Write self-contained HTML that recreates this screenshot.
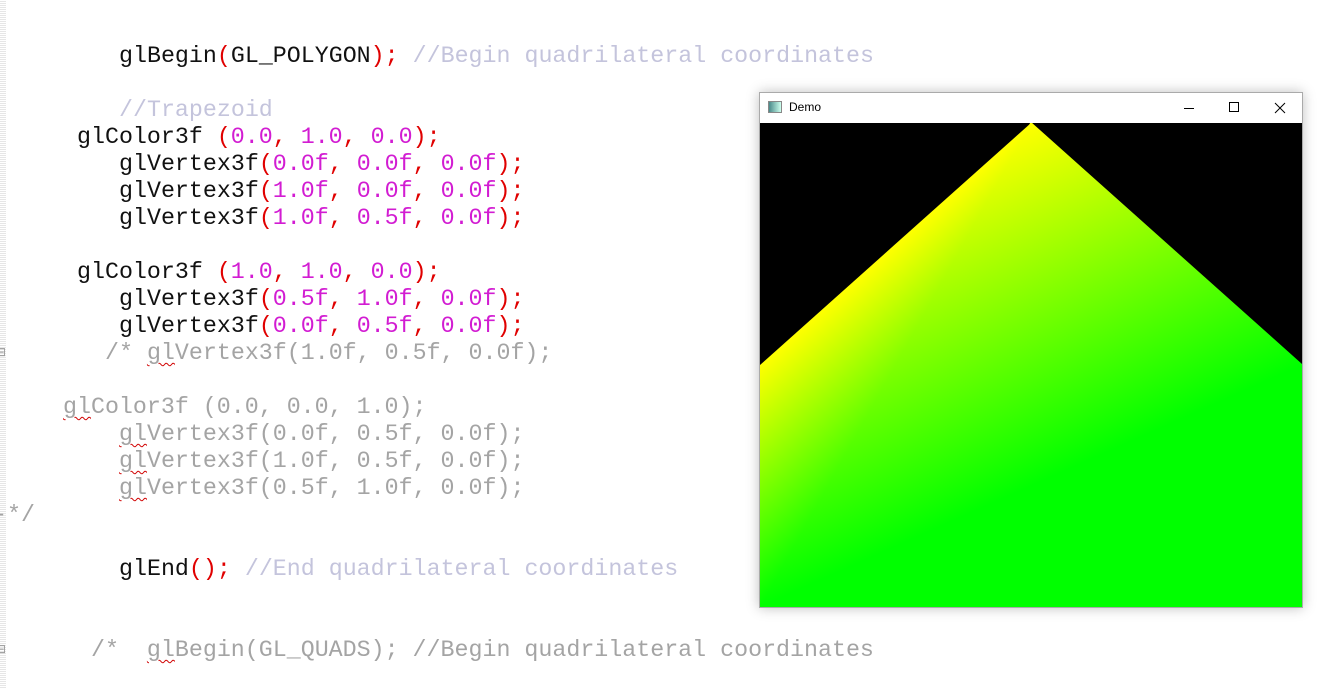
<!DOCTYPE html>
<html><head><style>
body{margin:0;width:1343px;height:689px;background:#fff;position:relative;overflow:hidden}
.l{position:absolute;margin:0;font-family:"Liberation Mono","Courier New",monospace;font-size:23.3px;line-height:27px;white-space:pre;color:#111}
.r{color:#e00000}.n{color:#d21cd2}.c{color:#c4c4dc}.g{color:#a4a4a4}
.u{text-decoration:underline wavy #d00000;text-decoration-thickness:1px;text-underline-offset:3px}
.gut{position:absolute;left:0;top:0;width:6px;height:689px;background:repeating-linear-gradient(#fff 0 1px,#e6e6e6 1px 2px)}
.fm{position:absolute;left:-4px;font-family:"DejaVu Sans",sans-serif;font-size:12px;color:#999}
</style></head><body>
<div class="gut"></div>
<div class="l" style="left:119px;top:43px">glBegin<span class="r">(</span>GL_POLYGON<span class="r">);</span> <span class="c">//Begin quadrilateral coordinates</span></div>
<div class="l c" style="left:119px;top:97px">//Trapezoid</div>
<div class="l" style="left:77px;top:124px">glColor3f <span class="r">(</span><span class="n">0.0</span><span class="r">,</span> <span class="n">1.0</span><span class="r">,</span> <span class="n">0.0</span><span class="r">);</span></div>
<div class="l" style="left:119px;top:151px">glVertex3f<span class="r">(</span><span class="n">0.0f</span><span class="r">,</span> <span class="n">0.0f</span><span class="r">,</span> <span class="n">0.0f</span><span class="r">);</span></div>
<div class="l" style="left:119px;top:178px">glVertex3f<span class="r">(</span><span class="n">1.0f</span><span class="r">,</span> <span class="n">0.0f</span><span class="r">,</span> <span class="n">0.0f</span><span class="r">);</span></div>
<div class="l" style="left:119px;top:205px">glVertex3f<span class="r">(</span><span class="n">1.0f</span><span class="r">,</span> <span class="n">0.5f</span><span class="r">,</span> <span class="n">0.0f</span><span class="r">);</span></div>
<div class="l" style="left:77px;top:259px">glColor3f <span class="r">(</span><span class="n">1.0</span><span class="r">,</span> <span class="n">1.0</span><span class="r">,</span> <span class="n">0.0</span><span class="r">);</span></div>
<div class="l" style="left:119px;top:286px">glVertex3f<span class="r">(</span><span class="n">0.5f</span><span class="r">,</span> <span class="n">1.0f</span><span class="r">,</span> <span class="n">0.0f</span><span class="r">);</span></div>
<div class="l" style="left:119px;top:313px">glVertex3f<span class="r">(</span><span class="n">0.0f</span><span class="r">,</span> <span class="n">0.5f</span><span class="r">,</span> <span class="n">0.0f</span><span class="r">);</span></div>
<div class="fm" style="top:345px">⊟</div>
<div class="l g" style="left:105px;top:340px">/* <span class="u">gl</span>Vertex3f(1.0f, 0.5f, 0.0f);</div>
<div class="l g" style="left:63px;top:394px"><span class="u">gl</span>Color3f (0.0, 0.0, 1.0);</div>
<div class="l g" style="left:119px;top:421px"><span class="u">gl</span>Vertex3f(0.0f, 0.5f, 0.0f);</div>
<div class="l g" style="left:119px;top:448px"><span class="u">gl</span>Vertex3f(1.0f, 0.5f, 0.0f);</div>
<div class="l g" style="left:119px;top:475px"><span class="u">gl</span>Vertex3f(0.5f, 1.0f, 0.0f);</div>
<div class="l g" style="left:-7px;top:502px">-*/</div>
<div class="l" style="left:119px;top:556px">glEnd<span class="r">();</span> <span class="c">//End quadrilateral coordinates</span></div>
<div class="fm" style="top:642px">⊟</div>
<div class="l g" style="left:91px;top:637px">/*  <span class="u">gl</span>Begin(GL_QUADS); //Begin quadrilateral coordinates</div>

<div style="position:absolute;left:759px;top:92px;width:542px;height:514px;border:1px solid #aaa;background:#fff;box-shadow:0 0 12px rgba(0,0,0,0.25)">
  <div style="position:absolute;left:8px;top:8px;width:12px;height:10px;border:1px solid #888;background:linear-gradient(90deg,#4a8a8a,#cfe)"></div>
  <div style="position:absolute;left:29px;top:7px;font-family:'Liberation Sans',sans-serif;font-size:12px;color:#000">Demo</div>
  <svg style="position:absolute;left:0;top:0" width="542" height="30">
    <line x1="424" y1="15.5" x2="434" y2="15.5" stroke="#000" stroke-width="1"/>
    <rect x="469.5" y="9.5" width="9" height="9" fill="none" stroke="#000"/>
    <path d="M515 10 L525 20 M525 10 L515 20" stroke="#000" stroke-width="1"/>
  </svg>
  <svg style="position:absolute;left:0;top:30px" width="542" height="484">
    <defs>
      <linearGradient id="ga" gradientUnits="userSpaceOnUse" x1="406.1" y1="302.7" x2="271" y2="0"><stop offset="0" stop-color="#00ff00"/><stop offset="1" stop-color="#ffff00"/></linearGradient>
      <linearGradient id="gb" gradientUnits="userSpaceOnUse" x1="0" y1="484" x2="-120.2" y2="349.4"><stop offset="0" stop-color="#00ff00"/><stop offset="1" stop-color="#ffff00"/></linearGradient>
    </defs>
    <rect width="542" height="484" fill="#000"/>
    <polygon points="0,484 542,484 542,242" fill="#00ff00" stroke="#00ff00" stroke-width="1.5" stroke-linejoin="round"/>
    <polygon points="0,484 542,242 271,0" fill="url(#ga)" stroke="url(#ga)" stroke-width="1.5" stroke-linejoin="round"/>
    <polygon points="0,484 271,0 0,242" fill="url(#gb)"/>
    <path d="M0 242 L271 0 L542 242 L542 484" fill="none" stroke="#000" stroke-width="0"/>
  </svg>
</div>
</body></html>
